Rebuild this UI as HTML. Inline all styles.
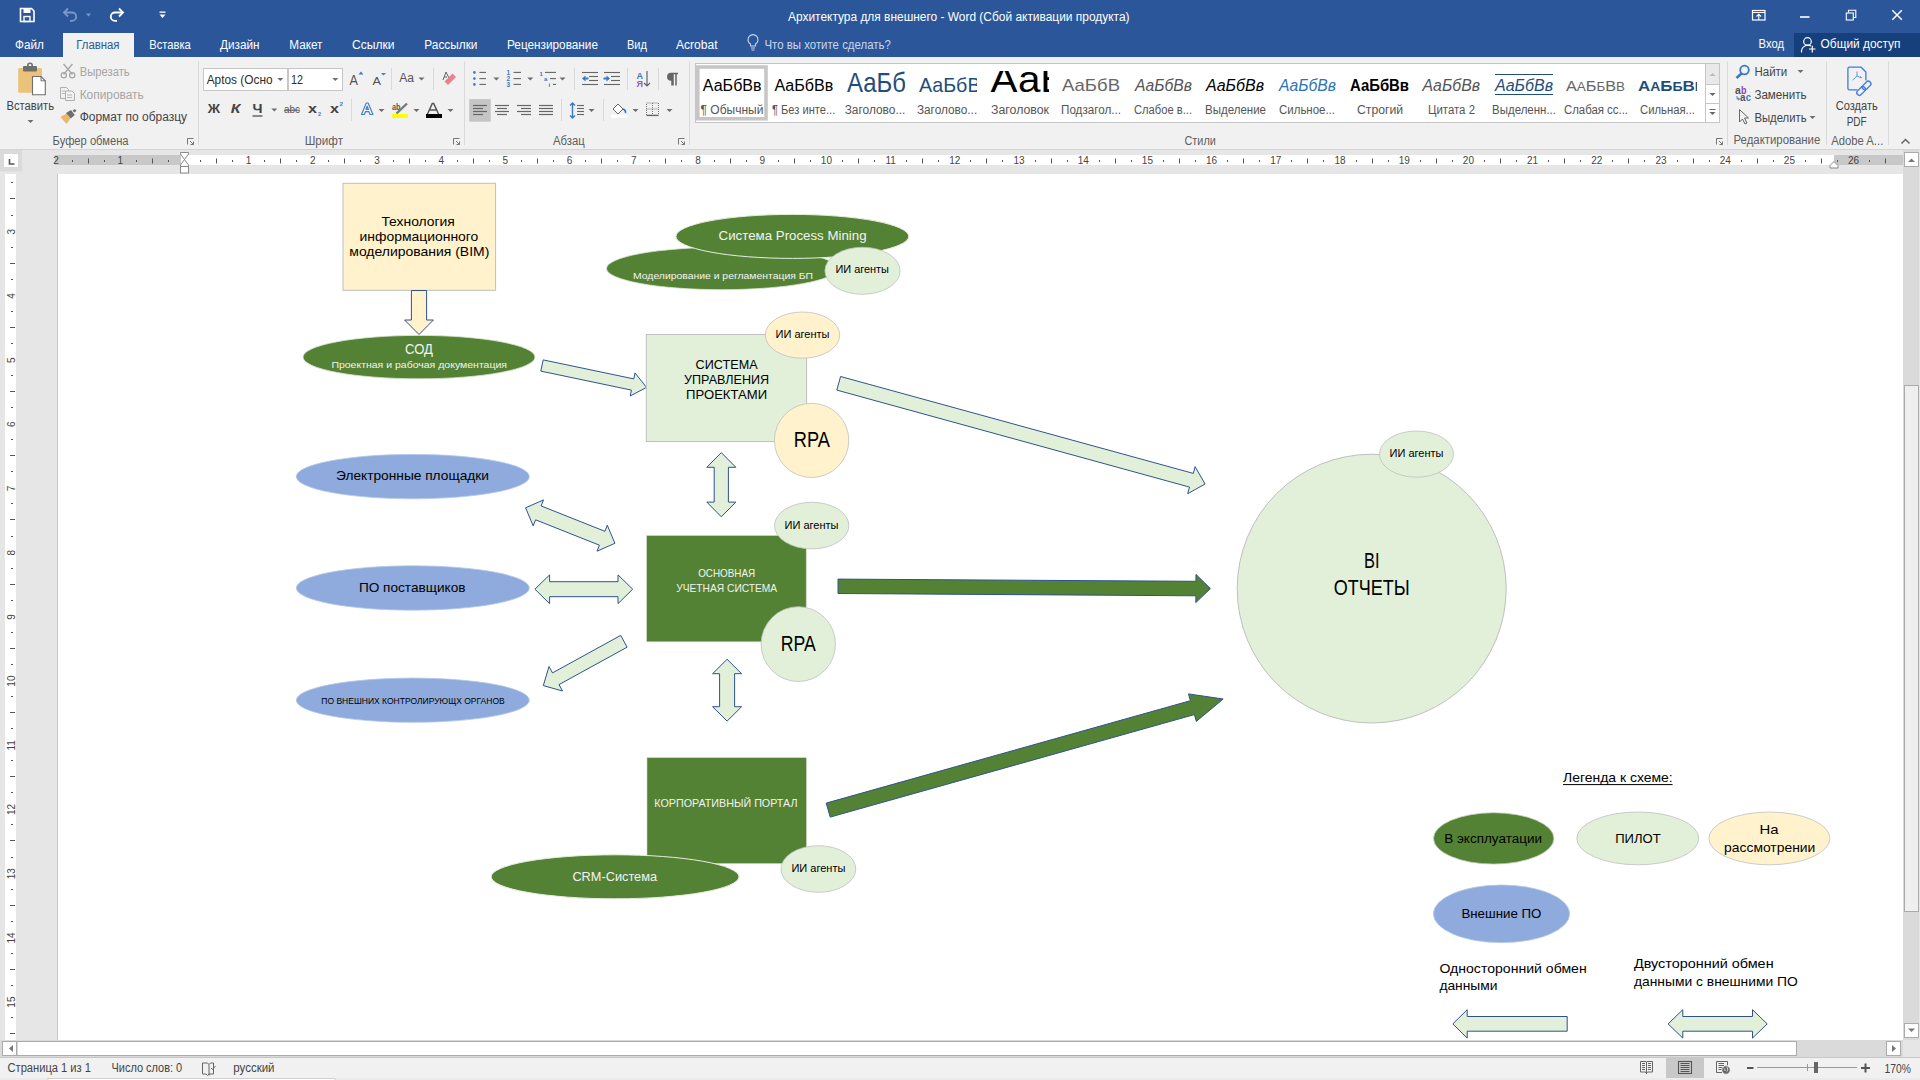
<!DOCTYPE html>
<html><head><meta charset="utf-8"><title>Word</title>
<style>
html,body{margin:0;padding:0;width:1920px;height:1080px;overflow:hidden;background:#fff;}
svg{display:block;font-family:"Liberation Sans", sans-serif;}
</style></head><body>
<svg width="1920" height="1080" viewBox="0 0 1920 1080">
<rect x="0" y="0" width="1920" height="57" fill="#2B579A" stroke="none" stroke-width="1" />
<path d="M20.5,8.5 h11 l2.5,2.5 v10.5 h-13.5 z" fill="none" stroke="#fff" stroke-width="1.6"/>
<rect x="23.5" y="9" width="7" height="4" fill="#fff"/>
<rect x="24" y="16.5" width="6" height="5" fill="none" stroke="#fff" stroke-width="1.4"/>
<path d="M65,12.5 h7 a4.2,4.2 0 0 1 0,8.4 h-2" fill="none" stroke="#7C99C6" stroke-width="1.8"/>
<path d="M68,8.5 l-4,4 4,4" fill="none" stroke="#7C99C6" stroke-width="1.8"/>
<path d="M86,13.5 h5 l-2.5,3 z" fill="#7C99C6"/>
<path d="M122,12.5 h-7 a4.2,4.2 0 0 0 0,8.4 h2" fill="none" stroke="#fff" stroke-width="1.8"/>
<path d="M119,8.5 l4,4 -4,4" fill="none" stroke="#fff" stroke-width="1.8"/>
<rect x="159.5" y="11.5" width="6" height="1.3" fill="#fff"/>
<path d="M159.5,14.5 h6 l-3,3.5 z" fill="#fff"/>
<text x="788" y="21.2" font-size="12.5" fill="#FFFFFF" text-anchor="start" font-weight="normal" font-style="normal" textLength="341.5" lengthAdjust="spacingAndGlyphs" >Архитектура для внешнего - Word (Сбой активации продукта)</text>
<rect x="1752.5" y="10.5" width="12.5" height="9.5" fill="none" stroke="#fff" stroke-width="1.2"/>
<line x1="1752.5" y1="12.5" x2="1765" y2="12.5" stroke="#fff" stroke-width="1"/>
<path d="M1758.8,20 v-5 M1756.5,16.5 l2.3,-2.3 2.3,2.3" fill="none" stroke="#fff" stroke-width="1.1"/>
<rect x="1800" y="16.2" width="9.5" height="1.6" fill="#FFFFFF" stroke="none" stroke-width="1" />
<rect x="1846.3" y="13" width="7" height="7" fill="none" stroke="#fff" stroke-width="1.1"/>
<path d="M1848.5,12.5 v-2.3 h7.3 v7.3 h-2.3" fill="none" stroke="#fff" stroke-width="1.1"/>
<path d="M1892.3,10.3 l9.5,9.5 M1901.8,10.3 l-9.5,9.5" stroke="#fff" stroke-width="1.5"/>
<rect x="63" y="33" width="71" height="24" fill="#F1F1F1" stroke="none" stroke-width="1" />
<text x="15" y="49.3" font-size="12.5" fill="#FFFFFF" text-anchor="start" font-weight="normal" font-style="normal" textLength="28.8" lengthAdjust="spacingAndGlyphs" >Файл</text>
<text x="76.3" y="49.3" font-size="12.5" fill="#2B579A" text-anchor="start" font-weight="normal" font-style="normal" textLength="43.2" lengthAdjust="spacingAndGlyphs" >Главная</text>
<text x="149.3" y="49.3" font-size="12.5" fill="#FFFFFF" text-anchor="start" font-weight="normal" font-style="normal" textLength="41.5" lengthAdjust="spacingAndGlyphs" >Вставка</text>
<text x="220" y="49.3" font-size="12.5" fill="#FFFFFF" text-anchor="start" font-weight="normal" font-style="normal" textLength="39.5" lengthAdjust="spacingAndGlyphs" >Дизайн</text>
<text x="289.3" y="49.3" font-size="12.5" fill="#FFFFFF" text-anchor="start" font-weight="normal" font-style="normal" textLength="33.2" lengthAdjust="spacingAndGlyphs" >Макет</text>
<text x="352" y="49.3" font-size="12.5" fill="#FFFFFF" text-anchor="start" font-weight="normal" font-style="normal" textLength="42.5" lengthAdjust="spacingAndGlyphs" >Ссылки</text>
<text x="424.3" y="49.3" font-size="12.5" fill="#FFFFFF" text-anchor="start" font-weight="normal" font-style="normal" textLength="53.2" lengthAdjust="spacingAndGlyphs" >Рассылки</text>
<text x="507" y="49.3" font-size="12.5" fill="#FFFFFF" text-anchor="start" font-weight="normal" font-style="normal" textLength="91" lengthAdjust="spacingAndGlyphs" >Рецензирование</text>
<text x="627" y="49.3" font-size="12.5" fill="#FFFFFF" text-anchor="start" font-weight="normal" font-style="normal" textLength="20" lengthAdjust="spacingAndGlyphs" >Вид</text>
<text x="676" y="49.3" font-size="12.5" fill="#FFFFFF" text-anchor="start" font-weight="normal" font-style="normal" textLength="41.5" lengthAdjust="spacingAndGlyphs" >Acrobat</text>
<path d="M750.5,46 v-2 a5,5 0 1 1 5,0 v2 z" fill="none" stroke="#C9D5EA" stroke-width="1.1"/>
<path d="M751,48 h4 M751.5,50 h3" stroke="#C9D5EA" stroke-width="1.1"/>
<text x="764.5" y="49.3" font-size="12.5" fill="#C9D5EA" text-anchor="start" font-weight="normal" font-style="normal" textLength="126.3" lengthAdjust="spacingAndGlyphs" >Что вы хотите сделать?</text>
<text x="1758.6" y="48.4" font-size="12.5" fill="#FFFFFF" text-anchor="start" font-weight="normal" font-style="normal" textLength="25.4" lengthAdjust="spacingAndGlyphs" >Вход</text>
<rect x="1794" y="33" width="126" height="24" fill="#16407B" stroke="none" stroke-width="1" />
<circle cx="1807.5" cy="41.5" r="3.8" fill="none" stroke="#fff" stroke-width="1.2"/>
<path d="M1801.5,52.5 a6.5,6.5 0 0 1 9.5,-6.5" fill="none" stroke="#fff" stroke-width="1.2"/>
<path d="M1809,49 h6.5 M1812.3,45.8 v6.7" stroke="#fff" stroke-width="1.2"/>
<text x="1820.6" y="48.4" font-size="12.5" fill="#FFFFFF" text-anchor="start" font-weight="normal" font-style="normal" textLength="79.8" lengthAdjust="spacingAndGlyphs" >Общий доступ</text>
<rect x="0" y="57" width="1920" height="92" fill="#F1F1F1" stroke="none" stroke-width="1" />
<line x1="0" y1="149.5" x2="1920" y2="149.5" stroke="#D4D4D4" stroke-width="1" />
<rect x="18.2" y="68" width="23.8" height="24.7" rx="1.5" fill="#EBC27A"/>
<rect x="23" y="66" width="14" height="5.5" rx="1" fill="#6E6E6E"/>
<circle cx="30" cy="65.5" r="2.2" fill="none" stroke="#6E6E6E" stroke-width="1.6"/>
<path d="M32.5,76.5 h8.5 l4.3,4.3 v14 h-12.8 z" fill="#fff" stroke="#6E6E6E" stroke-width="1.1"/>
<path d="M41,76.5 v4.3 h4.3" fill="none" stroke="#6E6E6E" stroke-width="1"/>
<text x="6.5" y="109.7" font-size="12" fill="#444444" text-anchor="start" font-weight="normal" font-style="normal" textLength="47.5" lengthAdjust="spacingAndGlyphs" >Вставить</text>
<path d="M27.5,120.0 h6 l-3,3 z" fill="#6D6D6D"/>
<path d="M63.5,64 l9,10.5 M72.5,64 l-9,10.5" stroke="#A8A8A8" stroke-width="1.4"/>
<circle cx="63.8" cy="75.3" r="2.6" fill="none" stroke="#A8A8A8" stroke-width="1.3"/>
<circle cx="72.2" cy="75.3" r="2.6" fill="none" stroke="#A8A8A8" stroke-width="1.3"/>
<text x="79.7" y="76.1" font-size="12" fill="#A6A6A6" text-anchor="start" font-weight="normal" font-style="normal" textLength="50.0" lengthAdjust="spacingAndGlyphs" >Вырезать</text>
<path d="M60.5,87.5 h6 l2,2 v9 h-8 z" fill="#F1F1F1" stroke="#AEAEAE" stroke-width="1"/>
<path d="M65.5,91 h6.5 l2.5,2.5 v7 h-9 z" fill="#F1F1F1" stroke="#AEAEAE" stroke-width="1"/>
<path d="M62,91 h3 M62,93.5 h3 M67,95 h5 M67,97.5 h5" stroke="#AEAEAE" stroke-width="0.9"/>
<text x="79.7" y="98.8" font-size="12" fill="#A6A6A6" text-anchor="start" font-weight="normal" font-style="normal" textLength="64.1" lengthAdjust="spacingAndGlyphs" >Копировать</text>
<path d="M60.5,117 l6,-3.5 4,5 -4,5.5 z" fill="#E8B86A"/>
<path d="M66,113 l5,-3 3.8,5 -4,3.5 z" fill="#6E6E6E"/>
<path d="M72.5,110.5 l2.5,-1.5 1.5,2 -2.3,1.6 z" fill="#6E6E6E"/>
<text x="79.7" y="121.1" font-size="12" fill="#444444" text-anchor="start" font-weight="normal" font-style="normal" textLength="107.3" lengthAdjust="spacingAndGlyphs" >Формат по образцу</text>
<text x="52.6" y="144.6" font-size="12" fill="#5E5E5E" text-anchor="start" font-weight="normal" font-style="normal" textLength="76.0" lengthAdjust="spacingAndGlyphs" >Буфер обмена</text>
<path d="M187.5,144.5 v-6 h6" fill="none" stroke="#777" stroke-width="1"/>
<path d="M190,141 l3.5,3.5 M193.5,141.5 v3 h-3" fill="none" stroke="#777" stroke-width="1"/>
<line x1="198.5" y1="61.5" x2="198.5" y2="145" stroke="#D9D9D9" stroke-width="1" />
<rect x="203.5" y="68.5" width="84" height="22" fill="#fff" stroke="#C6C6C6" stroke-width="1" />
<rect x="288.5" y="68.5" width="54" height="22" fill="#fff" stroke="#C6C6C6" stroke-width="1" />
<text x="206.7" y="83.5" font-size="12" fill="#2C2C2C" text-anchor="start" font-weight="normal" font-style="normal" textLength="65.9" lengthAdjust="spacingAndGlyphs" >Aptos (Осно</text>
<path d="M277.3,78.0 h6 l-3,3 z" fill="#6D6D6D"/>
<text x="291" y="83.5" font-size="12" fill="#2C2C2C" text-anchor="start" font-weight="normal" font-style="normal" textLength="12" lengthAdjust="spacingAndGlyphs" >12</text>
<path d="M332.3,78.0 h6 l-3,3 z" fill="#6D6D6D"/>
<text x="349.6" y="85" font-size="14" fill="#555" text-anchor="start" font-weight="normal" font-style="normal" textLength="8.4" lengthAdjust="spacingAndGlyphs" >A</text>
<path d="M358.5,74.5 l2.5,-3 2.5,3 z" fill="#3F7FC4"/>
<text x="372.5" y="85" font-size="11" fill="#555" text-anchor="start" font-weight="normal" font-style="normal" textLength="8.5" lengthAdjust="spacingAndGlyphs" >A</text>
<path d="M381,73 h5 l-2.5,2.5 z" fill="#3F7FC4"/>
<line x1="391.5" y1="68" x2="391.5" y2="90" stroke="#D9D9D9" stroke-width="1" />
<text x="399.2" y="81.5" font-size="12.5" fill="#555" text-anchor="start" font-weight="normal" font-style="normal" textLength="14.8" lengthAdjust="spacingAndGlyphs" >Aa</text>
<path d="M418.5,77.5 h6 l-3,3 z" fill="#6D6D6D"/>
<line x1="433.5" y1="68" x2="433.5" y2="90" stroke="#D9D9D9" stroke-width="1" />
<path d="M446,72 l-3,8 M446,72 l3,6 M444,77 h3" stroke="#666" stroke-width="1" fill="none"/>
<path d="M448,85 l8,-8 -3.5,-3.5 -8,8 z" fill="#E9818E"/>
<text x="207.8" y="113.3" font-size="13" fill="#444" text-anchor="start" font-weight="bold" font-style="normal" textLength="12.3" lengthAdjust="spacingAndGlyphs" >Ж</text>
<text x="230.7" y="113.3" font-size="13" fill="#444" text-anchor="start" font-weight="bold" font-style="italic" textLength="9.7" lengthAdjust="spacingAndGlyphs" >К</text>
<text x="252.5" y="113.3" font-size="13" fill="#444" text-anchor="start" font-weight="bold" font-style="normal" textLength="10.0" lengthAdjust="spacingAndGlyphs" >Ч</text>
<line x1="252.5" y1="116" x2="262.5" y2="116" stroke="#444" stroke-width="1.2" />
<path d="M271.3,108.5 h6 l-3,3 z" fill="#6D6D6D"/>
<text x="284" y="113.3" font-size="11.5" fill="#555" text-anchor="start" font-weight="normal" font-style="normal" textLength="16" lengthAdjust="spacingAndGlyphs" >abc</text>
<line x1="284" y1="110.2" x2="300" y2="110.2" stroke="#555" stroke-width="1" />
<text x="308" y="113.3" font-size="13" fill="#444" text-anchor="start" font-weight="bold" font-style="normal" textLength="9" lengthAdjust="spacingAndGlyphs" >x</text>
<text x="318" y="115.5" font-size="5.5" fill="#3F7FC4" text-anchor="start" font-weight="bold" font-style="normal" textLength="3" lengthAdjust="spacingAndGlyphs" >2</text>
<text x="330" y="113.3" font-size="13" fill="#444" text-anchor="start" font-weight="bold" font-style="normal" textLength="9" lengthAdjust="spacingAndGlyphs" >x</text>
<text x="339.5" y="106" font-size="5.5" fill="#3F7FC4" text-anchor="start" font-weight="bold" font-style="normal" textLength="3.5" lengthAdjust="spacingAndGlyphs" >2</text>
<line x1="351.5" y1="99" x2="351.5" y2="121" stroke="#D9D9D9" stroke-width="1" />
<path d="M361.5,114.5 l4.8,-11.5 h1.8 l4.8,11.5 h-2.8 l-1.1,-2.8 h-3.6 l-1.1,2.8 z M366,109.3 h2.4 l-1.2,-3.2 z" fill="#fff" stroke="#3F7FC4" stroke-width="1.2" stroke-linejoin="round"/>
<path d="M378.5,109.0 h6 l-3,3 z" fill="#6D6D6D"/>
<text x="392" y="109.5" font-size="8.5" fill="#555" text-anchor="start" font-weight="bold" font-style="normal" textLength="8.5" lengthAdjust="spacingAndGlyphs" >ab</text>
<path d="M396.5,113.5 l10.5,-10" stroke="#777" stroke-width="2.4"/>
<rect x="392" y="114" width="16" height="4" fill="#FFFF00" stroke="none" stroke-width="1" />
<path d="M413.5,109.0 h6 l-3,3 z" fill="#6D6D6D"/>
<path d="M427.5,114 l4.8,-10.5 h1.4 l4.8,10.5 M429.5,110 h7" fill="none" stroke="#555" stroke-width="1.5"/>
<rect x="426" y="114" width="16" height="4" fill="#000" stroke="none" stroke-width="1" />
<path d="M447.5,109.0 h6 l-3,3 z" fill="#6D6D6D"/>
<text x="304.7" y="144.6" font-size="12" fill="#5E5E5E" text-anchor="start" font-weight="normal" font-style="normal" textLength="38.3" lengthAdjust="spacingAndGlyphs" >Шрифт</text>
<path d="M453.5,144.5 v-6 h6" fill="none" stroke="#777" stroke-width="1"/>
<path d="M456,141 l3.5,3.5 M459.5,141.5 v3 h-3" fill="none" stroke="#777" stroke-width="1"/>
<line x1="464.5" y1="61.5" x2="464.5" y2="145" stroke="#D9D9D9" stroke-width="1" />
<circle cx="474.4" cy="72.4" r="1.3" fill="#3C78C0"/>
<line x1="479.4" y1="72.4" x2="486" y2="72.4" stroke="#666" stroke-width="1.1" />
<circle cx="474.4" cy="78.6" r="1.3" fill="#3C78C0"/>
<line x1="479.4" y1="78.6" x2="486" y2="78.6" stroke="#666" stroke-width="1.1" />
<circle cx="474.4" cy="84.4" r="1.3" fill="#3C78C0"/>
<line x1="479.4" y1="84.4" x2="486" y2="84.4" stroke="#666" stroke-width="1.1" />
<path d="M493.4,77.5 h6 l-3,3 z" fill="#6D6D6D"/>
<text x="506.5" y="74.9" font-size="6.5" fill="#3C78C0" text-anchor="start" font-weight="bold" font-style="normal" >1</text>
<line x1="513.5" y1="72.4" x2="521" y2="72.4" stroke="#666" stroke-width="1.1" />
<text x="506.5" y="81.1" font-size="6.5" fill="#3C78C0" text-anchor="start" font-weight="bold" font-style="normal" >2</text>
<line x1="513.5" y1="78.6" x2="521" y2="78.6" stroke="#666" stroke-width="1.1" />
<text x="506.5" y="86.9" font-size="6.5" fill="#3C78C0" text-anchor="start" font-weight="bold" font-style="normal" >3</text>
<line x1="513.5" y1="84.4" x2="521" y2="84.4" stroke="#666" stroke-width="1.1" />
<path d="M527.3,77.5 h6 l-3,3 z" fill="#6D6D6D"/>
<text x="539.5" y="75.5" font-size="6" fill="#3C78C0" text-anchor="start" font-weight="bold" font-style="normal" >1</text>
<line x1="545" y1="72.4" x2="556" y2="72.4" stroke="#666" stroke-width="1.1" />
<text x="544" y="81" font-size="6" fill="#3C78C0" text-anchor="start" font-weight="bold" font-style="normal" >a</text>
<line x1="550" y1="78.6" x2="556" y2="78.6" stroke="#666" stroke-width="1.1" />
<text x="548.5" y="86.5" font-size="6" fill="#3C78C0" text-anchor="start" font-weight="bold" font-style="normal" >i</text>
<line x1="553" y1="84.4" x2="556" y2="84.4" stroke="#666" stroke-width="1.1" />
<path d="M559.5,77.5 h6 l-3,3 z" fill="#6D6D6D"/>
<line x1="574.5" y1="68" x2="574.5" y2="90" stroke="#D9D9D9" stroke-width="1" />
<line x1="582" y1="72.5" x2="598" y2="72.5" stroke="#666" stroke-width="1.1" />
<line x1="589" y1="76.5" x2="598" y2="76.5" stroke="#666" stroke-width="1.1" />
<line x1="589" y1="80.5" x2="598" y2="80.5" stroke="#666" stroke-width="1.1" />
<line x1="582" y1="84.5" x2="598" y2="84.5" stroke="#666" stroke-width="1.1" />
<path d="M582,78.5 l3.5,-3 v2 h3 v2 h-3 v2 z" fill="#3C78C0"/>
<line x1="604" y1="72.5" x2="620" y2="72.5" stroke="#666" stroke-width="1.1" />
<line x1="611" y1="76.5" x2="620" y2="76.5" stroke="#666" stroke-width="1.1" />
<line x1="611" y1="80.5" x2="620" y2="80.5" stroke="#666" stroke-width="1.1" />
<line x1="604" y1="84.5" x2="620" y2="84.5" stroke="#666" stroke-width="1.1" />
<path d="M610,78.5 l-3.5,-3 v2 h-3 v2 h3 v2 z" fill="#3C78C0"/>
<line x1="627.5" y1="68" x2="627.5" y2="90" stroke="#D9D9D9" stroke-width="1" />
<text x="636.5" y="78.5" font-size="9" fill="#3C78C0" text-anchor="start" font-weight="bold" font-style="normal" >A</text>
<text x="636.5" y="86.5" font-size="9" fill="#9B59B6" text-anchor="start" font-weight="bold" font-style="normal" >Я</text>
<path d="M647,71 v15 M644,83 l3,3 3,-3" fill="none" stroke="#666" stroke-width="1.2"/>
<line x1="658.5" y1="68" x2="658.5" y2="90" stroke="#D9D9D9" stroke-width="1" />
<path d="M673,73.5 h-2 a3.2,3.2 0 0 0 0,6.4 h1 v5.6 M673,73.5 v12 M676,73.5 v12 M672,73.5 h6" fill="none" stroke="#666" stroke-width="1.5"/>
<path d="M671,73.5 a3.2,3.2 0 0 0 0,6.4 h2 v-6.4 z" fill="#666"/>
<rect x="469.2" y="99.1" width="21.6" height="22.6" fill="#C5C5C5" stroke="none" stroke-width="1" />
<line x1="473" y1="105.5" x2="487" y2="105.5" stroke="#666" stroke-width="1.2" />
<line x1="473" y1="108.5" x2="483" y2="108.5" stroke="#666" stroke-width="1.2" />
<line x1="473" y1="111.5" x2="487" y2="111.5" stroke="#666" stroke-width="1.2" />
<line x1="473" y1="114.5" x2="483" y2="114.5" stroke="#666" stroke-width="1.2" />
<line x1="495.0" y1="105.5" x2="509.0" y2="105.5" stroke="#666" stroke-width="1.2" />
<line x1="497.0" y1="108.5" x2="507.0" y2="108.5" stroke="#666" stroke-width="1.2" />
<line x1="495.0" y1="111.5" x2="509.0" y2="111.5" stroke="#666" stroke-width="1.2" />
<line x1="497.0" y1="114.5" x2="507.0" y2="114.5" stroke="#666" stroke-width="1.2" />
<line x1="517" y1="105.5" x2="531" y2="105.5" stroke="#666" stroke-width="1.2" />
<line x1="521" y1="108.5" x2="531" y2="108.5" stroke="#666" stroke-width="1.2" />
<line x1="517" y1="111.5" x2="531" y2="111.5" stroke="#666" stroke-width="1.2" />
<line x1="521" y1="114.5" x2="531" y2="114.5" stroke="#666" stroke-width="1.2" />
<line x1="539" y1="105.5" x2="553" y2="105.5" stroke="#666" stroke-width="1.2" />
<line x1="539" y1="108.5" x2="553" y2="108.5" stroke="#666" stroke-width="1.2" />
<line x1="539" y1="111.5" x2="553" y2="111.5" stroke="#666" stroke-width="1.2" />
<line x1="539" y1="114.5" x2="553" y2="114.5" stroke="#666" stroke-width="1.2" />
<line x1="561.5" y1="99" x2="561.5" y2="121" stroke="#D9D9D9" stroke-width="1" />
<path d="M572.5,103 v15 M570,105.5 l2.5,-2.5 2.5,2.5 M570,115.5 l2.5,2.5 2.5,-2.5" fill="none" stroke="#3C78C0" stroke-width="1.4"/>
<line x1="577" y1="105.5" x2="584" y2="105.5" stroke="#666" stroke-width="1.1" />
<line x1="577" y1="108.5" x2="584" y2="108.5" stroke="#666" stroke-width="1.1" />
<line x1="577" y1="111.5" x2="584" y2="111.5" stroke="#666" stroke-width="1.1" />
<line x1="577" y1="114.5" x2="584" y2="114.5" stroke="#666" stroke-width="1.1" />
<path d="M588.5,109.0 h6 l-3,3 z" fill="#6D6D6D"/>
<line x1="603.5" y1="99" x2="603.5" y2="121" stroke="#D9D9D9" stroke-width="1" />
<path d="M613,109 l5,-5 5,5 -5,5 z" fill="#fff" stroke="#666" stroke-width="1"/>
<path d="M623,109 q3,1 2.5,4" fill="none" stroke="#3C78C0" stroke-width="1.6"/>
<rect x="611" y="114.5" width="16" height="3.5" fill="#fff" stroke="none" stroke-width="1" />
<path d="M632.5,109.0 h6 l-3,3 z" fill="#6D6D6D"/>
<rect x="646.5" y="103" width="12" height="12" fill="none" stroke="#777" stroke-width="1" stroke-dasharray="1,1"/>
<line x1="652.5" y1="103" x2="652.5" y2="115" stroke="#777" stroke-width="1" stroke-dasharray="1,1"/>
<line x1="646.5" y1="109" x2="658.5" y2="109" stroke="#777" stroke-width="1" stroke-dasharray="1,1"/>
<line x1="646.5" y1="115.5" x2="658.5" y2="115.5" stroke="#666" stroke-width="1.2" />
<path d="M666.5,109.0 h6 l-3,3 z" fill="#6D6D6D"/>
<text x="553" y="144.6" font-size="12" fill="#5E5E5E" text-anchor="start" font-weight="normal" font-style="normal" textLength="31.8" lengthAdjust="spacingAndGlyphs" >Абзац</text>
<path d="M678.5,144.5 v-6 h6" fill="none" stroke="#777" stroke-width="1"/>
<path d="M681,141 l3.5,3.5 M684.5,141.5 v3 h-3" fill="none" stroke="#777" stroke-width="1"/>
<line x1="689.5" y1="61.5" x2="689.5" y2="145" stroke="#D9D9D9" stroke-width="1" />
<rect x="695.5" y="63.5" width="1024" height="59" fill="#fff" stroke="#C6C6C6" stroke-width="1" />
<rect x="697.8" y="67" width="68.2" height="51.8" fill="none" stroke="#C6C6C6" stroke-width="3.6"/>
<defs><clipPath id="sc0"><rect x="700" y="71" width="61" height="46"/></clipPath><clipPath id="sc1"><rect x="772" y="71" width="61" height="46"/></clipPath><clipPath id="sc2"><rect x="844" y="71" width="61" height="46"/></clipPath><clipPath id="sc3"><rect x="916" y="71" width="61" height="46"/></clipPath><clipPath id="sc4"><rect x="988" y="71" width="61" height="46"/></clipPath><clipPath id="sc5"><rect x="1060" y="71" width="61" height="46"/></clipPath><clipPath id="sc6"><rect x="1132" y="71" width="61" height="46"/></clipPath><clipPath id="sc7"><rect x="1204" y="71" width="61" height="46"/></clipPath><clipPath id="sc8"><rect x="1276" y="71" width="61" height="46"/></clipPath><clipPath id="sc9"><rect x="1348" y="71" width="61" height="46"/></clipPath><clipPath id="sc10"><rect x="1420" y="71" width="61" height="46"/></clipPath><clipPath id="sc11"><rect x="1492" y="71" width="61" height="46"/></clipPath><clipPath id="sc12"><rect x="1564" y="71" width="61" height="46"/></clipPath><clipPath id="sc13"><rect x="1636" y="71" width="61" height="46"/></clipPath></defs>
<g clip-path="url(#sc0)">
<text x="702.8" y="90.6" font-size="16" fill="#000" text-anchor="start" font-weight="normal" font-style="normal" textLength="58.8" lengthAdjust="spacingAndGlyphs" >АаБбВв</text>
</g>
<text x="700.6" y="113.6" font-size="12" fill="#555" text-anchor="start" font-weight="normal" font-style="normal" textLength="62.8" lengthAdjust="spacingAndGlyphs" >¶ Обычный</text>
<g clip-path="url(#sc1)">
<text x="774.4" y="90.6" font-size="16" fill="#000" text-anchor="start" font-weight="normal" font-style="normal" textLength="59.0" lengthAdjust="spacingAndGlyphs" >АаБбВв</text>
</g>
<text x="772" y="113.6" font-size="12" fill="#555" text-anchor="start" font-weight="normal" font-style="normal" textLength="63.3" lengthAdjust="spacingAndGlyphs" >¶ Без инте...</text>
<g clip-path="url(#sc2)">
<text x="847" y="92.2" font-size="28" fill="#1F4E79" text-anchor="start" font-weight="normal" font-style="normal" textLength="75" lengthAdjust="spacingAndGlyphs" >АаБбВ</text>
</g>
<text x="844.7" y="113.6" font-size="12" fill="#555" text-anchor="start" font-weight="normal" font-style="normal" textLength="60.6" lengthAdjust="spacingAndGlyphs" >Заголово...</text>
<g clip-path="url(#sc3)">
<text x="918.9" y="92.2" font-size="21" fill="#1F4E79" text-anchor="start" font-weight="normal" font-style="normal" textLength="72.1" lengthAdjust="spacingAndGlyphs" >АаБбВв</text>
</g>
<text x="916.9" y="113.6" font-size="12" fill="#555" text-anchor="start" font-weight="normal" font-style="normal" textLength="60.3" lengthAdjust="spacingAndGlyphs" >Заголово...</text>
<g clip-path="url(#sc4)">
<text x="990.5" y="92.2" font-size="37" fill="#000" text-anchor="start" font-weight="normal" font-style="normal" textLength="99.5" lengthAdjust="spacingAndGlyphs" >АаБб</text>
</g>
<text x="991" y="113.6" font-size="12" fill="#555" text-anchor="start" font-weight="normal" font-style="normal" textLength="58" lengthAdjust="spacingAndGlyphs" >Заголовок</text>
<g clip-path="url(#sc5)">
<text x="1062" y="91" font-size="17" fill="#666" text-anchor="start" font-weight="normal" font-style="normal" textLength="58" lengthAdjust="spacingAndGlyphs" >АаБбВ</text>
</g>
<text x="1061" y="113.6" font-size="12" fill="#555" text-anchor="start" font-weight="normal" font-style="normal" textLength="60" lengthAdjust="spacingAndGlyphs" >Подзагол...</text>
<g clip-path="url(#sc6)">
<text x="1135" y="90.6" font-size="16" fill="#555" text-anchor="start" font-weight="normal" font-style="italic" textLength="57" lengthAdjust="spacingAndGlyphs" >АаБбВв</text>
</g>
<text x="1134" y="113.6" font-size="12" fill="#555" text-anchor="start" font-weight="normal" font-style="normal" textLength="58" lengthAdjust="spacingAndGlyphs" >Слабое в...</text>
<g clip-path="url(#sc7)">
<text x="1206" y="90.6" font-size="16" fill="#000" text-anchor="start" font-weight="normal" font-style="italic" textLength="58" lengthAdjust="spacingAndGlyphs" >АаБбВв</text>
</g>
<text x="1205" y="113.6" font-size="12" fill="#555" text-anchor="start" font-weight="normal" font-style="normal" textLength="61" lengthAdjust="spacingAndGlyphs" >Выделение</text>
<g clip-path="url(#sc8)">
<text x="1279" y="90.6" font-size="16" fill="#2E74B5" text-anchor="start" font-weight="normal" font-style="italic" textLength="57" lengthAdjust="spacingAndGlyphs" >АаБбВв</text>
</g>
<text x="1279" y="113.6" font-size="12" fill="#555" text-anchor="start" font-weight="normal" font-style="normal" textLength="56" lengthAdjust="spacingAndGlyphs" >Сильное...</text>
<g clip-path="url(#sc9)">
<text x="1350" y="90.6" font-size="16" fill="#000" text-anchor="start" font-weight="bold" font-style="normal" textLength="59" lengthAdjust="spacingAndGlyphs" >АаБбВв</text>
</g>
<text x="1357" y="113.6" font-size="12" fill="#555" text-anchor="start" font-weight="normal" font-style="normal" textLength="46" lengthAdjust="spacingAndGlyphs" >Строгий</text>
<g clip-path="url(#sc10)">
<text x="1422.5" y="90.6" font-size="16" fill="#555" text-anchor="start" font-weight="normal" font-style="italic" textLength="57.5" lengthAdjust="spacingAndGlyphs" >АаБбВв</text>
</g>
<text x="1428" y="113.6" font-size="12" fill="#555" text-anchor="start" font-weight="normal" font-style="normal" textLength="47" lengthAdjust="spacingAndGlyphs" >Цитата 2</text>
<g clip-path="url(#sc11)">
<text x="1495" y="90.6" font-size="16" fill="#1F4E79" text-anchor="start" font-weight="normal" font-style="italic" textLength="58" lengthAdjust="spacingAndGlyphs" >АаБбВв</text>
</g>
<text x="1492" y="113.6" font-size="12" fill="#555" text-anchor="start" font-weight="normal" font-style="normal" textLength="64" lengthAdjust="spacingAndGlyphs" >Выделенн...</text>
<g clip-path="url(#sc12)">
<text x="1566" y="90.5" fill="#666" font-weight="normal" textLength="59" lengthAdjust="spacingAndGlyphs"><tspan font-size="15.5">А</tspan><tspan font-size="12.8">А</tspan><tspan font-size="15.5">Б</tspan><tspan font-size="12.8">Б</tspan><tspan font-size="15.5">В</tspan><tspan font-size="12.8">В</tspan></text>
</g>
<text x="1564" y="113.6" font-size="12" fill="#555" text-anchor="start" font-weight="normal" font-style="normal" textLength="64" lengthAdjust="spacingAndGlyphs" >Слабая сс...</text>
<g clip-path="url(#sc13)">
<text x="1638" y="90.5" fill="#1F4E79" font-weight="bold" textLength="67" lengthAdjust="spacingAndGlyphs"><tspan font-size="15.5">А</tspan><tspan font-size="12.8">А</tspan><tspan font-size="15.5">Б</tspan><tspan font-size="12.8">Б</tspan><tspan font-size="15.5">В</tspan><tspan font-size="12.8">В</tspan></text>
</g>
<text x="1640" y="113.6" font-size="12" fill="#555" text-anchor="start" font-weight="normal" font-style="normal" textLength="55" lengthAdjust="spacingAndGlyphs" >Сильная...</text>
<line x1="1495" y1="74.5" x2="1553" y2="74.5" stroke="#1F4E79" stroke-width="1" />
<line x1="1495" y1="94.5" x2="1553" y2="94.5" stroke="#1F4E79" stroke-width="1" />
<rect x="1705.5" y="63.5" width="14" height="21" fill="#E9E9E9" stroke="#C6C6C6" stroke-width="1" />
<rect x="1705.5" y="84.5" width="14" height="19" fill="#fff" stroke="#C6C6C6" stroke-width="1" />
<rect x="1705.5" y="103.5" width="14" height="19" fill="#fff" stroke="#C6C6C6" stroke-width="1" />
<path d="M1709.5,76 l3,-3 3,3 z" fill="#B9B9B9"/>
<path d="M1709.5,93 h6 l-3,3 z" fill="#666"/>
<line x1="1709.5" y1="109.5" x2="1715.5" y2="109.5" stroke="#666" stroke-width="1" />
<path d="M1709.5,112 h6 l-3,3 z" fill="#666"/>
<text x="1184.5" y="144.6" font-size="12" fill="#5E5E5E" text-anchor="start" font-weight="normal" font-style="normal" textLength="31.3" lengthAdjust="spacingAndGlyphs" >Стили</text>
<path d="M1716.5,144.5 v-6 h6" fill="none" stroke="#777" stroke-width="1"/>
<path d="M1719,141 l3.5,3.5 M1722.5,141.5 v3 h-3" fill="none" stroke="#777" stroke-width="1"/>
<line x1="1727.5" y1="61.5" x2="1727.5" y2="145" stroke="#D9D9D9" stroke-width="1" />
<circle cx="1744.5" cy="70" r="4.3" fill="none" stroke="#3C78C0" stroke-width="1.8"/>
<path d="M1741.5,73.5 l-5,4.5" stroke="#3C78C0" stroke-width="2.6"/>
<text x="1754.4" y="75.9" font-size="12" fill="#444444" text-anchor="start" font-weight="normal" font-style="normal" textLength="32.9" lengthAdjust="spacingAndGlyphs" >Найти</text>
<path d="M1797.5,70.0 h6 l-3,3 z" fill="#6D6D6D"/>
<text x="1735" y="93.8" font-size="10" fill="#555" text-anchor="start" font-weight="bold" font-style="normal" textLength="5.8" lengthAdjust="spacingAndGlyphs" >a</text>
<text x="1741" y="93.8" font-size="10.5" fill="#8E44AD" text-anchor="start" font-weight="bold" font-style="normal" textLength="5.5" lengthAdjust="spacingAndGlyphs" >b</text>
<text x="1740" y="100.8" font-size="10" fill="#555" text-anchor="start" font-weight="bold" font-style="normal" textLength="5.5" lengthAdjust="spacingAndGlyphs" >a</text>
<text x="1745.8" y="100.8" font-size="10" fill="#3C78C0" text-anchor="start" font-weight="bold" font-style="normal" textLength="5.2" lengthAdjust="spacingAndGlyphs" >c</text>
<path d="M1737,96 v3 h2.5 M1738,97.8 l1.5,1.2 -1.5,1.2" fill="none" stroke="#3C78C0" stroke-width="0.9"/>
<text x="1754.4" y="98.5" font-size="12" fill="#444444" text-anchor="start" font-weight="normal" font-style="normal" textLength="52.2" lengthAdjust="spacingAndGlyphs" >Заменить</text>
<path d="M1739.5,109.5 v12.5 l3,-3 2.5,5 2,-1 -2.5,-5 h4 z" fill="#F1F1F1" stroke="#666" stroke-width="1"/>
<text x="1754.4" y="121.5" font-size="12" fill="#444444" text-anchor="start" font-weight="normal" font-style="normal" textLength="52.2" lengthAdjust="spacingAndGlyphs" >Выделить</text>
<path d="M1809.5,116.0 h6 l-3,3 z" fill="#6D6D6D"/>
<text x="1733.5" y="144.4" font-size="12" fill="#5E5E5E" text-anchor="start" font-weight="normal" font-style="normal" textLength="86.8" lengthAdjust="spacingAndGlyphs" >Редактирование</text>
<line x1="1826.5" y1="61.5" x2="1826.5" y2="145" stroke="#D9D9D9" stroke-width="1" />
<path d="M1857.5,89.8 h-8 a1.6,1.6 0 0 1 -1.6,-1.6 v-19.4 a1.6,1.6 0 0 1 1.6,-1.6 h11.6 l4.8,4.8 v8.5" fill="none" stroke="#3D7BE0" stroke-width="1.3"/>
<path d="M1857,71.5 v4.5 l-4.5,4.2 M1857,76 l4.5,2 -1,-1.5" fill="none" stroke="#3D7BE0" stroke-width="0.8"/>
<rect x="1864" y="80.5" width="5.2" height="10" rx="2.6" transform="rotate(45 1866.6 85.5)" fill="none" stroke="#3D7BE0" stroke-width="1.3"/>
<rect x="1858.5" y="86" width="5.2" height="10" rx="2.6" transform="rotate(45 1861.1 91)" fill="none" stroke="#3D7BE0" stroke-width="1.3"/>
<text x="1835.8" y="110" font-size="12" fill="#444444" text-anchor="start" font-weight="normal" font-style="normal" textLength="42.0" lengthAdjust="spacingAndGlyphs" >Создать</text>
<text x="1846.7" y="125.9" font-size="12" fill="#444444" text-anchor="start" font-weight="normal" font-style="normal" textLength="20.0" lengthAdjust="spacingAndGlyphs" >PDF</text>
<text x="1831.2" y="145.2" font-size="12" fill="#5E5E5E" text-anchor="start" font-weight="normal" font-style="normal" textLength="52.1" lengthAdjust="spacingAndGlyphs" >Adobe A...</text>
<line x1="1888.5" y1="61.5" x2="1888.5" y2="145" stroke="#D9D9D9" stroke-width="1" />
<path d="M1901.5,143.5 l4,-4 4,4" fill="none" stroke="#666" stroke-width="1.5"/>
<rect x="0" y="150" width="1920" height="24" fill="#E6E6E6" stroke="none" stroke-width="1" />
<rect x="0" y="174" width="58" height="866" fill="#E6E6E6" stroke="none" stroke-width="1" />
<rect x="0" y="150" width="22" height="21.5" fill="#DADADA" stroke="none" stroke-width="1" />
<rect x="4" y="154" width="14" height="13" fill="#fff" stroke="none" stroke-width="1" />
<path d="M9.5,159 v5 h5" fill="none" stroke="#555" stroke-width="1.6"/>
<rect x="55" y="155" width="126" height="10" fill="#C8C8C8" stroke="none" stroke-width="1" />
<rect x="181" y="155" width="1653" height="10" fill="#fff" stroke="none" stroke-width="1" />
<rect x="1834" y="155" width="69" height="10" fill="#C8C8C8" stroke="none" stroke-width="1" />
<text x="56.0" y="163.9" font-size="10" fill="#444" text-anchor="middle" font-weight="normal" font-style="normal" >2</text>
<rect x="72" y="160" width="1" height="2" fill="#555" stroke="none" stroke-width="1" />
<line x1="88.5" y1="158.5" x2="88.5" y2="163.5" stroke="#555" stroke-width="1" />
<rect x="104" y="160" width="1" height="2" fill="#555" stroke="none" stroke-width="1" />
<text x="120.2" y="163.9" font-size="10" fill="#444" text-anchor="middle" font-weight="normal" font-style="normal" >1</text>
<rect x="136" y="160" width="1" height="2" fill="#555" stroke="none" stroke-width="1" />
<line x1="152.5" y1="158.5" x2="152.5" y2="163.5" stroke="#555" stroke-width="1" />
<rect x="168" y="160" width="1" height="2" fill="#555" stroke="none" stroke-width="1" />
<rect x="200" y="160" width="1" height="2" fill="#555" stroke="none" stroke-width="1" />
<line x1="216.5" y1="158.5" x2="216.5" y2="163.5" stroke="#555" stroke-width="1" />
<rect x="232" y="160" width="1" height="2" fill="#555" stroke="none" stroke-width="1" />
<text x="248.6" y="163.9" font-size="10" fill="#444" text-anchor="middle" font-weight="normal" font-style="normal" >1</text>
<rect x="264" y="160" width="1" height="2" fill="#555" stroke="none" stroke-width="1" />
<line x1="280.5" y1="158.5" x2="280.5" y2="163.5" stroke="#555" stroke-width="1" />
<rect x="296" y="160" width="1" height="2" fill="#555" stroke="none" stroke-width="1" />
<text x="312.8" y="163.9" font-size="10" fill="#444" text-anchor="middle" font-weight="normal" font-style="normal" >2</text>
<rect x="328" y="160" width="1" height="2" fill="#555" stroke="none" stroke-width="1" />
<line x1="344.5" y1="158.5" x2="344.5" y2="163.5" stroke="#555" stroke-width="1" />
<rect x="360" y="160" width="1" height="2" fill="#555" stroke="none" stroke-width="1" />
<text x="377.0" y="163.9" font-size="10" fill="#444" text-anchor="middle" font-weight="normal" font-style="normal" >3</text>
<rect x="393" y="160" width="1" height="2" fill="#555" stroke="none" stroke-width="1" />
<line x1="409.5" y1="158.5" x2="409.5" y2="163.5" stroke="#555" stroke-width="1" />
<rect x="425" y="160" width="1" height="2" fill="#555" stroke="none" stroke-width="1" />
<text x="441.2" y="163.9" font-size="10" fill="#444" text-anchor="middle" font-weight="normal" font-style="normal" >4</text>
<rect x="457" y="160" width="1" height="2" fill="#555" stroke="none" stroke-width="1" />
<line x1="473.5" y1="158.5" x2="473.5" y2="163.5" stroke="#555" stroke-width="1" />
<rect x="489" y="160" width="1" height="2" fill="#555" stroke="none" stroke-width="1" />
<text x="505.4" y="163.9" font-size="10" fill="#444" text-anchor="middle" font-weight="normal" font-style="normal" >5</text>
<rect x="521" y="160" width="1" height="2" fill="#555" stroke="none" stroke-width="1" />
<line x1="537.5" y1="158.5" x2="537.5" y2="163.5" stroke="#555" stroke-width="1" />
<rect x="553" y="160" width="1" height="2" fill="#555" stroke="none" stroke-width="1" />
<text x="569.6" y="163.9" font-size="10" fill="#444" text-anchor="middle" font-weight="normal" font-style="normal" >6</text>
<rect x="585" y="160" width="1" height="2" fill="#555" stroke="none" stroke-width="1" />
<line x1="601.5" y1="158.5" x2="601.5" y2="163.5" stroke="#555" stroke-width="1" />
<rect x="617" y="160" width="1" height="2" fill="#555" stroke="none" stroke-width="1" />
<text x="633.8" y="163.9" font-size="10" fill="#444" text-anchor="middle" font-weight="normal" font-style="normal" >7</text>
<rect x="649" y="160" width="1" height="2" fill="#555" stroke="none" stroke-width="1" />
<line x1="665.5" y1="158.5" x2="665.5" y2="163.5" stroke="#555" stroke-width="1" />
<rect x="681" y="160" width="1" height="2" fill="#555" stroke="none" stroke-width="1" />
<text x="698.0" y="163.9" font-size="10" fill="#444" text-anchor="middle" font-weight="normal" font-style="normal" >8</text>
<rect x="714" y="160" width="1" height="2" fill="#555" stroke="none" stroke-width="1" />
<line x1="730.5" y1="158.5" x2="730.5" y2="163.5" stroke="#555" stroke-width="1" />
<rect x="746" y="160" width="1" height="2" fill="#555" stroke="none" stroke-width="1" />
<text x="762.2" y="163.9" font-size="10" fill="#444" text-anchor="middle" font-weight="normal" font-style="normal" >9</text>
<rect x="778" y="160" width="1" height="2" fill="#555" stroke="none" stroke-width="1" />
<line x1="794.5" y1="158.5" x2="794.5" y2="163.5" stroke="#555" stroke-width="1" />
<rect x="810" y="160" width="1" height="2" fill="#555" stroke="none" stroke-width="1" />
<text x="826.4" y="163.9" font-size="10" fill="#444" text-anchor="middle" font-weight="normal" font-style="normal" >10</text>
<rect x="842" y="160" width="1" height="2" fill="#555" stroke="none" stroke-width="1" />
<line x1="858.5" y1="158.5" x2="858.5" y2="163.5" stroke="#555" stroke-width="1" />
<rect x="874" y="160" width="1" height="2" fill="#555" stroke="none" stroke-width="1" />
<text x="890.6" y="163.9" font-size="10" fill="#444" text-anchor="middle" font-weight="normal" font-style="normal" >11</text>
<rect x="906" y="160" width="1" height="2" fill="#555" stroke="none" stroke-width="1" />
<line x1="922.5" y1="158.5" x2="922.5" y2="163.5" stroke="#555" stroke-width="1" />
<rect x="938" y="160" width="1" height="2" fill="#555" stroke="none" stroke-width="1" />
<text x="954.8" y="163.9" font-size="10" fill="#444" text-anchor="middle" font-weight="normal" font-style="normal" >12</text>
<rect x="970" y="160" width="1" height="2" fill="#555" stroke="none" stroke-width="1" />
<line x1="986.5" y1="158.5" x2="986.5" y2="163.5" stroke="#555" stroke-width="1" />
<rect x="1002" y="160" width="1" height="2" fill="#555" stroke="none" stroke-width="1" />
<text x="1019.0" y="163.9" font-size="10" fill="#444" text-anchor="middle" font-weight="normal" font-style="normal" >13</text>
<rect x="1035" y="160" width="1" height="2" fill="#555" stroke="none" stroke-width="1" />
<line x1="1051.5" y1="158.5" x2="1051.5" y2="163.5" stroke="#555" stroke-width="1" />
<rect x="1067" y="160" width="1" height="2" fill="#555" stroke="none" stroke-width="1" />
<text x="1083.2" y="163.9" font-size="10" fill="#444" text-anchor="middle" font-weight="normal" font-style="normal" >14</text>
<rect x="1099" y="160" width="1" height="2" fill="#555" stroke="none" stroke-width="1" />
<line x1="1115.5" y1="158.5" x2="1115.5" y2="163.5" stroke="#555" stroke-width="1" />
<rect x="1131" y="160" width="1" height="2" fill="#555" stroke="none" stroke-width="1" />
<text x="1147.4" y="163.9" font-size="10" fill="#444" text-anchor="middle" font-weight="normal" font-style="normal" >15</text>
<rect x="1163" y="160" width="1" height="2" fill="#555" stroke="none" stroke-width="1" />
<line x1="1179.5" y1="158.5" x2="1179.5" y2="163.5" stroke="#555" stroke-width="1" />
<rect x="1195" y="160" width="1" height="2" fill="#555" stroke="none" stroke-width="1" />
<text x="1211.6" y="163.9" font-size="10" fill="#444" text-anchor="middle" font-weight="normal" font-style="normal" >16</text>
<rect x="1227" y="160" width="1" height="2" fill="#555" stroke="none" stroke-width="1" />
<line x1="1243.5" y1="158.5" x2="1243.5" y2="163.5" stroke="#555" stroke-width="1" />
<rect x="1259" y="160" width="1" height="2" fill="#555" stroke="none" stroke-width="1" />
<text x="1275.8" y="163.9" font-size="10" fill="#444" text-anchor="middle" font-weight="normal" font-style="normal" >17</text>
<rect x="1291" y="160" width="1" height="2" fill="#555" stroke="none" stroke-width="1" />
<line x1="1307.5" y1="158.5" x2="1307.5" y2="163.5" stroke="#555" stroke-width="1" />
<rect x="1323" y="160" width="1" height="2" fill="#555" stroke="none" stroke-width="1" />
<text x="1340.0" y="163.9" font-size="10" fill="#444" text-anchor="middle" font-weight="normal" font-style="normal" >18</text>
<rect x="1356" y="160" width="1" height="2" fill="#555" stroke="none" stroke-width="1" />
<line x1="1372.5" y1="158.5" x2="1372.5" y2="163.5" stroke="#555" stroke-width="1" />
<rect x="1388" y="160" width="1" height="2" fill="#555" stroke="none" stroke-width="1" />
<text x="1404.2" y="163.9" font-size="10" fill="#444" text-anchor="middle" font-weight="normal" font-style="normal" >19</text>
<rect x="1420" y="160" width="1" height="2" fill="#555" stroke="none" stroke-width="1" />
<line x1="1436.5" y1="158.5" x2="1436.5" y2="163.5" stroke="#555" stroke-width="1" />
<rect x="1452" y="160" width="1" height="2" fill="#555" stroke="none" stroke-width="1" />
<text x="1468.4" y="163.9" font-size="10" fill="#444" text-anchor="middle" font-weight="normal" font-style="normal" >20</text>
<rect x="1484" y="160" width="1" height="2" fill="#555" stroke="none" stroke-width="1" />
<line x1="1500.5" y1="158.5" x2="1500.5" y2="163.5" stroke="#555" stroke-width="1" />
<rect x="1516" y="160" width="1" height="2" fill="#555" stroke="none" stroke-width="1" />
<text x="1532.6" y="163.9" font-size="10" fill="#444" text-anchor="middle" font-weight="normal" font-style="normal" >21</text>
<rect x="1548" y="160" width="1" height="2" fill="#555" stroke="none" stroke-width="1" />
<line x1="1564.5" y1="158.5" x2="1564.5" y2="163.5" stroke="#555" stroke-width="1" />
<rect x="1580" y="160" width="1" height="2" fill="#555" stroke="none" stroke-width="1" />
<text x="1596.8" y="163.9" font-size="10" fill="#444" text-anchor="middle" font-weight="normal" font-style="normal" >22</text>
<rect x="1612" y="160" width="1" height="2" fill="#555" stroke="none" stroke-width="1" />
<line x1="1628.5" y1="158.5" x2="1628.5" y2="163.5" stroke="#555" stroke-width="1" />
<rect x="1644" y="160" width="1" height="2" fill="#555" stroke="none" stroke-width="1" />
<text x="1661.0" y="163.9" font-size="10" fill="#444" text-anchor="middle" font-weight="normal" font-style="normal" >23</text>
<rect x="1677" y="160" width="1" height="2" fill="#555" stroke="none" stroke-width="1" />
<line x1="1693.5" y1="158.5" x2="1693.5" y2="163.5" stroke="#555" stroke-width="1" />
<rect x="1709" y="160" width="1" height="2" fill="#555" stroke="none" stroke-width="1" />
<text x="1725.2" y="163.9" font-size="10" fill="#444" text-anchor="middle" font-weight="normal" font-style="normal" >24</text>
<rect x="1741" y="160" width="1" height="2" fill="#555" stroke="none" stroke-width="1" />
<line x1="1757.5" y1="158.5" x2="1757.5" y2="163.5" stroke="#555" stroke-width="1" />
<rect x="1773" y="160" width="1" height="2" fill="#555" stroke="none" stroke-width="1" />
<text x="1789.4" y="163.9" font-size="10" fill="#444" text-anchor="middle" font-weight="normal" font-style="normal" >25</text>
<rect x="1805" y="160" width="1" height="2" fill="#555" stroke="none" stroke-width="1" />
<line x1="1821.5" y1="158.5" x2="1821.5" y2="163.5" stroke="#555" stroke-width="1" />
<rect x="1837" y="160" width="1" height="2" fill="#555" stroke="none" stroke-width="1" />
<text x="1853.6" y="163.9" font-size="10" fill="#444" text-anchor="middle" font-weight="normal" font-style="normal" >26</text>
<rect x="1869" y="160" width="1" height="2" fill="#555" stroke="none" stroke-width="1" />
<line x1="1885.5" y1="158.5" x2="1885.5" y2="163.5" stroke="#555" stroke-width="1" />
<path d="M180.5,152.5 h8 v1.5 l-4,5.5 l4,5.5 v1.5 h-8 v-1.5 l4,-5.5 l-4,-5.5 z" fill="#fff" stroke="#8A8A8A" stroke-width="1"/>
<rect x="180.5" y="166.5" width="8" height="6.5" fill="#fff" stroke="#8A8A8A" stroke-width="1"/>
<path d="M1830,168 v-2.5 l4,-4 4,4 v2.5 z" fill="#fff" stroke="#8A8A8A" stroke-width="1"/>
<rect x="5" y="174" width="11" height="866" fill="#fff" stroke="none" stroke-width="1" />
<rect x="11" y="182" width="2" height="1" fill="#555" stroke="none" stroke-width="1" />
<rect x="10" y="198" width="5" height="1" fill="#555" stroke="none" stroke-width="1" />
<rect x="11" y="215" width="2" height="1" fill="#555" stroke="none" stroke-width="1" />
<text x="0" y="0" font-size="10" fill="#444" text-anchor="middle" transform="translate(15,231.7) rotate(-90)">3</text>
<rect x="11" y="247" width="2" height="1" fill="#555" stroke="none" stroke-width="1" />
<rect x="10" y="263" width="5" height="1" fill="#555" stroke="none" stroke-width="1" />
<rect x="11" y="279" width="2" height="1" fill="#555" stroke="none" stroke-width="1" />
<text x="0" y="0" font-size="10" fill="#444" text-anchor="middle" transform="translate(15,295.9) rotate(-90)">4</text>
<rect x="11" y="311" width="2" height="1" fill="#555" stroke="none" stroke-width="1" />
<rect x="10" y="327" width="5" height="1" fill="#555" stroke="none" stroke-width="1" />
<rect x="11" y="343" width="2" height="1" fill="#555" stroke="none" stroke-width="1" />
<text x="0" y="0" font-size="10" fill="#444" text-anchor="middle" transform="translate(15,360.1) rotate(-90)">5</text>
<rect x="11" y="375" width="2" height="1" fill="#555" stroke="none" stroke-width="1" />
<rect x="10" y="391" width="5" height="1" fill="#555" stroke="none" stroke-width="1" />
<rect x="11" y="407" width="2" height="1" fill="#555" stroke="none" stroke-width="1" />
<text x="0" y="0" font-size="10" fill="#444" text-anchor="middle" transform="translate(15,424.3) rotate(-90)">6</text>
<rect x="11" y="439" width="2" height="1" fill="#555" stroke="none" stroke-width="1" />
<rect x="10" y="455" width="5" height="1" fill="#555" stroke="none" stroke-width="1" />
<rect x="11" y="471" width="2" height="1" fill="#555" stroke="none" stroke-width="1" />
<text x="0" y="0" font-size="10" fill="#444" text-anchor="middle" transform="translate(15,488.5) rotate(-90)">7</text>
<rect x="11" y="503" width="2" height="1" fill="#555" stroke="none" stroke-width="1" />
<rect x="10" y="519" width="5" height="1" fill="#555" stroke="none" stroke-width="1" />
<rect x="11" y="536" width="2" height="1" fill="#555" stroke="none" stroke-width="1" />
<text x="0" y="0" font-size="10" fill="#444" text-anchor="middle" transform="translate(15,552.7) rotate(-90)">8</text>
<rect x="11" y="568" width="2" height="1" fill="#555" stroke="none" stroke-width="1" />
<rect x="10" y="584" width="5" height="1" fill="#555" stroke="none" stroke-width="1" />
<rect x="11" y="600" width="2" height="1" fill="#555" stroke="none" stroke-width="1" />
<text x="0" y="0" font-size="10" fill="#444" text-anchor="middle" transform="translate(15,616.9) rotate(-90)">9</text>
<rect x="11" y="632" width="2" height="1" fill="#555" stroke="none" stroke-width="1" />
<rect x="10" y="648" width="5" height="1" fill="#555" stroke="none" stroke-width="1" />
<rect x="11" y="664" width="2" height="1" fill="#555" stroke="none" stroke-width="1" />
<text x="0" y="0" font-size="10" fill="#444" text-anchor="middle" transform="translate(15,681.1) rotate(-90)">10</text>
<rect x="11" y="696" width="2" height="1" fill="#555" stroke="none" stroke-width="1" />
<rect x="10" y="712" width="5" height="1" fill="#555" stroke="none" stroke-width="1" />
<rect x="11" y="728" width="2" height="1" fill="#555" stroke="none" stroke-width="1" />
<text x="0" y="0" font-size="10" fill="#444" text-anchor="middle" transform="translate(15,745.3) rotate(-90)">11</text>
<rect x="11" y="760" width="2" height="1" fill="#555" stroke="none" stroke-width="1" />
<rect x="10" y="776" width="5" height="1" fill="#555" stroke="none" stroke-width="1" />
<rect x="11" y="792" width="2" height="1" fill="#555" stroke="none" stroke-width="1" />
<text x="0" y="0" font-size="10" fill="#444" text-anchor="middle" transform="translate(15,809.5) rotate(-90)">12</text>
<rect x="11" y="824" width="2" height="1" fill="#555" stroke="none" stroke-width="1" />
<rect x="10" y="840" width="5" height="1" fill="#555" stroke="none" stroke-width="1" />
<rect x="11" y="857" width="2" height="1" fill="#555" stroke="none" stroke-width="1" />
<text x="0" y="0" font-size="10" fill="#444" text-anchor="middle" transform="translate(15,873.7) rotate(-90)">13</text>
<rect x="11" y="889" width="2" height="1" fill="#555" stroke="none" stroke-width="1" />
<rect x="10" y="905" width="5" height="1" fill="#555" stroke="none" stroke-width="1" />
<rect x="11" y="921" width="2" height="1" fill="#555" stroke="none" stroke-width="1" />
<text x="0" y="0" font-size="10" fill="#444" text-anchor="middle" transform="translate(15,937.9) rotate(-90)">14</text>
<rect x="11" y="953" width="2" height="1" fill="#555" stroke="none" stroke-width="1" />
<rect x="10" y="969" width="5" height="1" fill="#555" stroke="none" stroke-width="1" />
<rect x="11" y="985" width="2" height="1" fill="#555" stroke="none" stroke-width="1" />
<text x="0" y="0" font-size="10" fill="#444" text-anchor="middle" transform="translate(15,1002.1) rotate(-90)">15</text>
<rect x="11" y="1017" width="2" height="1" fill="#555" stroke="none" stroke-width="1" />
<rect x="10" y="1033" width="5" height="1" fill="#555" stroke="none" stroke-width="1" />
<rect x="58" y="174" width="1845" height="866" fill="#fff" stroke="none" stroke-width="1" />
<line x1="57.5" y1="174" x2="57.5" y2="1040" stroke="#C6C6C6" stroke-width="1" />
<g>
<rect x="343" y="183.3" width="152.6" height="107" fill="#FFF2CC" stroke="#BFBFBF" stroke-width="1" />
<text x="381.4" y="225.8" font-size="13.5" fill="#000" text-anchor="start" font-weight="normal" font-style="normal" textLength="73.5" lengthAdjust="spacingAndGlyphs" >Технология</text>
<text x="359.6" y="241.0" font-size="13.5" fill="#000" text-anchor="start" font-weight="normal" font-style="normal" textLength="118.7" lengthAdjust="spacingAndGlyphs" >информационного</text>
<text x="349.3" y="255.8" font-size="13.5" fill="#000" text-anchor="start" font-weight="normal" font-style="normal" textLength="140" lengthAdjust="spacingAndGlyphs" >моделирования (BIM)</text>
<polygon points="411.4,290.5 411.4,320.0 404.6,320.0 419.0,334.5 433.4,320.0 426.6,320.0 426.6,290.5" fill="#FFF2CC" stroke="#2F528F" stroke-width="1" stroke-linejoin="miter"/>
<ellipse cx="419" cy="357.1" rx="116" ry="21.7" fill="#548235" stroke="#DDE6D5" stroke-width="0.8"/>
<text x="405.0" y="353.5" font-size="14" fill="#F2F2F2" text-anchor="start" font-weight="normal" font-style="normal" textLength="28" lengthAdjust="spacingAndGlyphs" >СОД</text>
<text x="331.4" y="367.7" font-size="9" fill="#F2F2F2" text-anchor="start" font-weight="normal" font-style="normal" textLength="175.6" lengthAdjust="spacingAndGlyphs" >Проектная и рабочая  документация</text>
<ellipse cx="722" cy="268.5" rx="115.5" ry="21.2" fill="#548235" stroke="#DDE6D5" stroke-width="0.8"/>
<ellipse cx="792.3" cy="236.4" rx="116.4" ry="22" fill="#548235" stroke="#E6EDE0" stroke-width="1"/>
<text x="718.6" y="239.7" font-size="13" fill="#F2F2F2" text-anchor="start" font-weight="normal" font-style="normal" textLength="148" lengthAdjust="spacingAndGlyphs" >Система Process Mining</text>
<text x="633.0" y="279.0" font-size="9" fill="#F2F2F2" text-anchor="start" font-weight="normal" font-style="normal" textLength="180" lengthAdjust="spacingAndGlyphs" >Моделирование и регламентация БП</text>
<ellipse cx="862.5" cy="270.8" rx="37.6" ry="23.5" fill="#E2F0D9" stroke="#BFBFBF" stroke-width="0.8"/>
<text x="835.4" y="273.4" font-size="11" fill="#000" text-anchor="start" font-weight="normal" font-style="normal" textLength="53.6" lengthAdjust="spacingAndGlyphs" >ИИ агенты</text>
<polygon points="540.8,371.1 631.4,390.1 630.2,396.0 646.5,387.4 635.0,372.9 633.8,378.9 543.2,359.9" fill="#E2F0D9" stroke="#2F528F" stroke-width="1" stroke-linejoin="miter"/>
<rect x="646.3" y="334.5" width="160.3" height="107" fill="#E2F0D9" stroke="#BFBFBF" stroke-width="1" />
<text x="695.6" y="368.5" font-size="13" fill="#000" text-anchor="start" font-weight="normal" font-style="normal" textLength="62" lengthAdjust="spacingAndGlyphs" >СИСТЕМА</text>
<text x="684.1" y="384.0" font-size="13" fill="#000" text-anchor="start" font-weight="normal" font-style="normal" textLength="85" lengthAdjust="spacingAndGlyphs" >УПРАВЛЕНИЯ</text>
<text x="686.1" y="399.1" font-size="13" fill="#000" text-anchor="start" font-weight="normal" font-style="normal" textLength="81" lengthAdjust="spacingAndGlyphs" >ПРОЕКТАМИ</text>
<ellipse cx="802.5" cy="335.1" rx="37.2" ry="23.1" fill="#FFF2CC" stroke="#BFBFBF" stroke-width="0.8"/>
<text x="775.5" y="338.0" font-size="11" fill="#000" text-anchor="start" font-weight="normal" font-style="normal" textLength="54" lengthAdjust="spacingAndGlyphs" >ИИ агенты</text>
<ellipse cx="811.6" cy="440.4" rx="37.2" ry="37.1" fill="#FFF2CC" stroke="#BFBFBF" stroke-width="0.8"/>
<text x="793.8" y="446.9" font-size="22" fill="#000" text-anchor="start" font-weight="normal" font-style="normal" textLength="36.1" lengthAdjust="spacingAndGlyphs" >RPA</text>
<polygon points="721.3,452.6 706.8,467.3 714.2,467.3 714.2,502.1 706.8,502.1 721.3,516.8 735.8,502.1 728.4,502.1 728.4,467.3 735.8,467.3" fill="#E2F0D9" stroke="#2F528F" stroke-width="1" stroke-linejoin="miter"/>
<polygon points="836.8,390.1 1189.5,487.1 1187.7,493.7 1205.1,484.0 1195.1,466.7 1193.3,473.4 840.6,376.5" fill="#E2F0D9" stroke="#2F528F" stroke-width="1" stroke-linejoin="miter"/>
<ellipse cx="412.8" cy="476.6" rx="116.5" ry="22.2" fill="#8FAADC" stroke="#B4C6E7" stroke-width="0.8"/>
<text x="336.0" y="479.8" font-size="13.5" fill="#000" text-anchor="start" font-weight="normal" font-style="normal" textLength="153" lengthAdjust="spacingAndGlyphs" >Электронные площадки</text>
<ellipse cx="412.8" cy="588" rx="116.5" ry="22.2" fill="#8FAADC" stroke="#B4C6E7" stroke-width="0.8"/>
<text x="358.9" y="591.6" font-size="13.5" fill="#000" text-anchor="start" font-weight="normal" font-style="normal" textLength="106.6" lengthAdjust="spacingAndGlyphs" >ПО поставщиков</text>
<ellipse cx="412.8" cy="700.2" rx="116.5" ry="22.1" fill="#8FAADC" stroke="#B4C6E7" stroke-width="0.8"/>
<text x="321.3" y="703.6" font-size="8.5" fill="#000" text-anchor="start" font-weight="normal" font-style="normal" textLength="183.4" lengthAdjust="spacingAndGlyphs" >ПО ВНЕШНИХ КОНТРОЛИРУЮЩХ ОРГАНОВ</text>
<polygon points="525.6,507.8 533.2,525.9 535.6,519.8 599.4,545.2 597.0,551.2 614.9,543.3 607.3,525.2 604.9,531.3 541.1,505.9 543.5,499.9" fill="#E2F0D9" stroke="#2F528F" stroke-width="1" stroke-linejoin="miter"/>
<polygon points="534.9,589.2 549.6,603.6 549.6,596.7 618.0,596.7 618.0,603.6 632.7,589.2 618.0,574.9 618.0,581.7 549.6,581.7 549.6,574.9" fill="#E2F0D9" stroke="#2F528F" stroke-width="1" stroke-linejoin="miter"/>
<polygon points="620.7,635.4 552.5,672.9 549.0,666.5 543.3,685.6 562.5,691.0 559.0,684.6 627.1,647.2" fill="#E2F0D9" stroke="#2F528F" stroke-width="1" stroke-linejoin="miter"/>
<rect x="646.7" y="535.6" width="159.5" height="106.2" fill="#548235" stroke="#C9D3C2" stroke-width="0.6" />
<text x="698.2" y="576.9" font-size="11" fill="#F2F2F2" text-anchor="start" font-weight="normal" font-style="normal" textLength="57" lengthAdjust="spacingAndGlyphs" >ОСНОВНАЯ</text>
<text x="676.2" y="591.7" font-size="11" fill="#F2F2F2" text-anchor="start" font-weight="normal" font-style="normal" textLength="101" lengthAdjust="spacingAndGlyphs" >УЧЕТНАЯ СИСТЕМА</text>
<ellipse cx="811.7" cy="525.6" rx="37.2" ry="23.3" fill="#E2F0D9" stroke="#BFBFBF" stroke-width="0.8"/>
<text x="784.5" y="529.4" font-size="11" fill="#000" text-anchor="start" font-weight="normal" font-style="normal" textLength="54" lengthAdjust="spacingAndGlyphs" >ИИ агенты</text>
<ellipse cx="798.3" cy="644.1" rx="37.2" ry="37.4" fill="#E2F0D9" stroke="#BFBFBF" stroke-width="0.8"/>
<text x="780.8" y="650.5" font-size="22" fill="#000" text-anchor="start" font-weight="normal" font-style="normal" textLength="35" lengthAdjust="spacingAndGlyphs" >RPA</text>
<polygon points="727.1,659.3 712.6,673.7 719.6,673.7 719.6,706.7 712.6,706.7 727.1,721.1 741.6,706.7 734.6,706.7 734.6,673.7 741.6,673.7" fill="#E2F0D9" stroke="#2F528F" stroke-width="1" stroke-linejoin="miter"/>
<polygon points="838.0,593.5 1195.9,595.8 1195.8,602.6 1210.4,588.6 1196.0,574.4 1195.9,581.3 838.0,579.1" fill="#548235" stroke="#2F528F" stroke-width="1" stroke-linejoin="miter"/>
<polygon points="830.2,817.1 1194.4,714.6 1196.3,721.4 1223.2,699.0 1188.5,693.9 1190.4,700.7 826.2,803.1" fill="#548235" stroke="#2F528F" stroke-width="1" stroke-linejoin="miter"/>
<ellipse cx="1371.7" cy="588.6" rx="134.5" ry="134.4" fill="#E2F0D9" stroke="#BFBFBF" stroke-width="1"/>
<text x="1364.0" y="567.8" font-size="21.5" fill="#000" text-anchor="start" font-weight="normal" font-style="normal" textLength="15.5" lengthAdjust="spacingAndGlyphs" >BI</text>
<text x="1333.8" y="594.7" font-size="21.5" fill="#000" text-anchor="start" font-weight="normal" font-style="normal" textLength="76" lengthAdjust="spacingAndGlyphs" >ОТЧЕТЫ</text>
<ellipse cx="1416.5" cy="454.1" rx="37" ry="23.1" fill="#E2F0D9" stroke="#BFBFBF" stroke-width="0.8"/>
<text x="1389.5" y="457.0" font-size="11" fill="#000" text-anchor="start" font-weight="normal" font-style="normal" textLength="54" lengthAdjust="spacingAndGlyphs" >ИИ агенты</text>
<rect x="647" y="757.7" width="159.4" height="105.8" fill="#548235" stroke="#C9D3C2" stroke-width="0.6" />
<text x="654.3" y="806.5" font-size="11" fill="#F2F2F2" text-anchor="start" font-weight="normal" font-style="normal" textLength="143.2" lengthAdjust="spacingAndGlyphs" >КОРПОРАТИВНЫЙ ПОРТАЛ</text>
<ellipse cx="615.1" cy="876.8" rx="123.9" ry="22" fill="#548235" stroke="#E6EDE0" stroke-width="1"/>
<text x="572.4" y="880.5" font-size="13.5" fill="#F2F2F2" text-anchor="start" font-weight="normal" font-style="normal" textLength="84.7" lengthAdjust="spacingAndGlyphs" >CRM-Система</text>
<ellipse cx="818.4" cy="869" rx="37.4" ry="23.3" fill="#E2F0D9" stroke="#BFBFBF" stroke-width="0.8"/>
<text x="791.4" y="872.0" font-size="11" fill="#000" text-anchor="start" font-weight="normal" font-style="normal" textLength="54" lengthAdjust="spacingAndGlyphs" >ИИ агенты</text>
<text x="1563.0" y="781.8" font-size="13.5" fill="#000" text-anchor="start" font-weight="normal" font-style="normal" textLength="109.7" lengthAdjust="spacingAndGlyphs" >Легенда к схеме:</text>
<line x1="1563" y1="784.6" x2="1672.6" y2="784.6" stroke="#000" stroke-width="1" />
<ellipse cx="1493.7" cy="838.4" rx="60.2" ry="25.7" fill="#548235" stroke="#C9D3C2" stroke-width="0.8"/>
<text x="1444.2" y="842.6" font-size="13.5" fill="#000" text-anchor="start" font-weight="normal" font-style="normal" textLength="97.8" lengthAdjust="spacingAndGlyphs" >В эксплуатации</text>
<ellipse cx="1637.8" cy="838.4" rx="61" ry="26.4" fill="#E2F0D9" stroke="#BFBFBF" stroke-width="0.8"/>
<text x="1615.2" y="842.8" font-size="13.5" fill="#000" text-anchor="start" font-weight="normal" font-style="normal" textLength="45.5" lengthAdjust="spacingAndGlyphs" >ПИЛОТ</text>
<ellipse cx="1769.4" cy="838.4" rx="60.5" ry="26.4" fill="#FFF2CC" stroke="#BFBFBF" stroke-width="0.8"/>
<text x="1759.5" y="833.5" font-size="13.5" fill="#000" text-anchor="start" font-weight="normal" font-style="normal" textLength="19" lengthAdjust="spacingAndGlyphs" >На</text>
<text x="1724.1" y="851.8" font-size="13.5" fill="#000" text-anchor="start" font-weight="normal" font-style="normal" textLength="91.2" lengthAdjust="spacingAndGlyphs" >рассмотрении</text>
<ellipse cx="1501.5" cy="913.8" rx="68.1" ry="28.8" fill="#8FAADC" stroke="#B4C6E7" stroke-width="0.8"/>
<text x="1461.4" y="918.1" font-size="13.5" fill="#000" text-anchor="start" font-weight="normal" font-style="normal" textLength="80" lengthAdjust="spacingAndGlyphs" >Внешние ПО</text>
<text x="1439.4" y="972.8" font-size="13.5" fill="#000" text-anchor="start" font-weight="normal" font-style="normal" textLength="147.3" lengthAdjust="spacingAndGlyphs" >Односторонний обмен</text>
<text x="1439.4" y="990.3" font-size="13.5" fill="#000" text-anchor="start" font-weight="normal" font-style="normal" textLength="58.1" lengthAdjust="spacingAndGlyphs" >данными</text>
<text x="1633.9" y="968.0" font-size="13.5" fill="#000" text-anchor="start" font-weight="normal" font-style="normal" textLength="139.7" lengthAdjust="spacingAndGlyphs" >Двусторонний  обмен</text>
<text x="1633.9" y="985.8" font-size="13.5" fill="#000" text-anchor="start" font-weight="normal" font-style="normal" textLength="163.9" lengthAdjust="spacingAndGlyphs" >данными с внешними ПО</text>
<polygon points="1567.2,1016.5 1467.2,1016.5 1467.2,1009.7 1452.8,1023.9 1467.2,1038.1 1467.2,1031.2 1567.2,1031.2" fill="#E2F0D9" stroke="#2F528F" stroke-width="1" stroke-linejoin="miter"/>
<polygon points="1668.1,1023.9 1682.8,1038.1 1682.8,1031.2 1752.5,1031.2 1752.5,1038.1 1767.2,1023.9 1752.5,1009.7 1752.5,1016.5 1682.8,1016.5 1682.8,1009.7" fill="#E2F0D9" stroke="#2F528F" stroke-width="1" stroke-linejoin="miter"/>
</g>
<rect x="0" y="1040" width="1920" height="17" fill="#E6E6E6" stroke="none" stroke-width="1" />
<rect x="1903" y="150" width="17" height="890" fill="#DADADA" stroke="none" stroke-width="1" />
<rect x="1904.5" y="152.5" width="14" height="14" fill="#fff" stroke="#ABABAB" stroke-width="1" />
<path d="M1908,162 l3.5,-3.5 3.5,3.5 z" fill="#777"/>
<rect x="1904.5" y="385.5" width="14" height="526" fill="#EFEFEF" stroke="#ABABAB" stroke-width="1" />
<rect x="1904.5" y="1023.5" width="14" height="14" fill="#fff" stroke="#ABABAB" stroke-width="1" />
<path d="M1908,1028.5 h7 l-3.5,3.5 z" fill="#777"/>
<rect x="0" y="1040" width="1903" height="17" fill="#DADADA" stroke="none" stroke-width="1" />
<rect x="2.5" y="1041.5" width="14" height="14" fill="#fff" stroke="#ABABAB" stroke-width="1" />
<path d="M13,1045 v7 l-4,-3.5 z" fill="#777"/>
<rect x="17" y="1041.5" width="1779.5" height="14" fill="#fff" stroke="#ABABAB" stroke-width="1" />
<rect x="1886.5" y="1041.5" width="14" height="14" fill="#fff" stroke="#ABABAB" stroke-width="1" />
<path d="M1892,1045 v7 l4,-3.5 z" fill="#777"/>
<rect x="1903" y="1040" width="17" height="17" fill="#E6E6E6" stroke="none" stroke-width="1" />
<rect x="1919" y="150" width="1" height="890" fill="#E6E6E6" stroke="none" stroke-width="1" />
<line x1="0" y1="1057.5" x2="1920" y2="1057.5" stroke="#C6C6C6" stroke-width="1" />
<rect x="0" y="1058" width="1920" height="22" fill="#F1F1F1" stroke="none" stroke-width="1" />
<text x="7.5" y="1072.3" font-size="12" fill="#444" text-anchor="start" font-weight="normal" font-style="normal" textLength="83.5" lengthAdjust="spacingAndGlyphs" >Страница 1 из 1</text>
<text x="111.5" y="1072.3" font-size="12" fill="#444" text-anchor="start" font-weight="normal" font-style="normal" textLength="70.7" lengthAdjust="spacingAndGlyphs" >Число слов: 0</text>
<path d="M202.5,1063 h5 l1.5,1.5 1.5,-1.5 h3 v11 h-4.5 l-1.5,1.5 -1.5,-1.5 h-3.5 z M209,1064.5 v11" fill="none" stroke="#666" stroke-width="1"/>
<path d="M211,1068 l1.5,1.5 3,-3.5" fill="none" stroke="#666" stroke-width="1"/>
<text x="233.3" y="1072.3" font-size="12" fill="#444" text-anchor="start" font-weight="normal" font-style="normal" textLength="41.2" lengthAdjust="spacingAndGlyphs" >русский</text>
<path d="M1640.5,1061.5 h5.5 l0.5,0.5 0.5,-0.5 h5.5 v10.5 h-5 l-1,1.5 -1,-1.5 h-5 z" fill="none" stroke="#666" stroke-width="1"/>
<line x1="1646.5" y1="1062" x2="1646.5" y2="1074" stroke="#666" stroke-width="1" />
<line x1="1642" y1="1063.5" x2="1645" y2="1063.5" stroke="#666" stroke-width="1" />
<line x1="1648" y1="1063.5" x2="1651" y2="1063.5" stroke="#666" stroke-width="1" />
<line x1="1642" y1="1065.5" x2="1645" y2="1065.5" stroke="#666" stroke-width="1" />
<line x1="1648" y1="1065.5" x2="1651" y2="1065.5" stroke="#666" stroke-width="1" />
<line x1="1642" y1="1067.5" x2="1645" y2="1067.5" stroke="#666" stroke-width="1" />
<line x1="1648" y1="1067.5" x2="1651" y2="1067.5" stroke="#666" stroke-width="1" />
<line x1="1642" y1="1069.5" x2="1645" y2="1069.5" stroke="#666" stroke-width="1" />
<line x1="1648" y1="1069.5" x2="1651" y2="1069.5" stroke="#666" stroke-width="1" />
<rect x="1666" y="1058" width="38" height="20" fill="#C8C8C8" stroke="none" stroke-width="1" />
<rect x="1678.5" y="1061.5" width="13" height="12" fill="none" stroke="#555" stroke-width="1.1"/>
<line x1="1680.5" y1="1063.5" x2="1689.5" y2="1063.5" stroke="#555" stroke-width="1" />
<line x1="1680.5" y1="1065.5" x2="1689.5" y2="1065.5" stroke="#555" stroke-width="1" />
<line x1="1680.5" y1="1067.5" x2="1689.5" y2="1067.5" stroke="#555" stroke-width="1" />
<line x1="1680.5" y1="1069.5" x2="1689.5" y2="1069.5" stroke="#555" stroke-width="1" />
<line x1="1680.5" y1="1071.5" x2="1689.5" y2="1071.5" stroke="#555" stroke-width="1" />
<path d="M1722,1072.5 h-5.5 v-11 h11 v4" fill="none" stroke="#666" stroke-width="1"/>
<line x1="1718.5" y1="1063.5" x2="1724" y2="1063.5" stroke="#666" stroke-width="1" />
<line x1="1718.5" y1="1065.5" x2="1724" y2="1065.5" stroke="#666" stroke-width="1" />
<line x1="1718.5" y1="1067.5" x2="1724" y2="1067.5" stroke="#666" stroke-width="1" />
<line x1="1718.5" y1="1069.5" x2="1724" y2="1069.5" stroke="#666" stroke-width="1" />
<circle cx="1726" cy="1070" r="4.2" fill="#666" stroke="#F1F1F1" stroke-width="0.8"/>
<path d="M1723.5,1068 q2,1 1.5,3 M1727,1067 q1.5,2 0,4.5" fill="none" stroke="#F1F1F1" stroke-width="0.8"/>
<rect x="1747" y="1067" width="6.5" height="2" fill="#555" stroke="none" stroke-width="1" />
<line x1="1757" y1="1067.5" x2="1857" y2="1067.5" stroke="#999" stroke-width="1" />
<line x1="1807.5" y1="1064" x2="1807.5" y2="1071" stroke="#999" stroke-width="1" />
<rect x="1814" y="1062" width="4" height="11" fill="#666" stroke="none" stroke-width="1" />
<rect x="1861" y="1067" width="9" height="2" fill="#555" stroke="none" stroke-width="1" />
<rect x="1864.5" y="1063.5" width="2" height="9" fill="#555" stroke="none" stroke-width="1" />
<text x="1884.6" y="1072.5" font-size="12" fill="#444" text-anchor="start" font-weight="normal" font-style="normal" textLength="26.4" lengthAdjust="spacingAndGlyphs" >170%</text>
<rect x="0" y="1078" width="1920" height="2" fill="#EBEBEB" stroke="none" stroke-width="1" />
<rect x="48" y="1078.5" width="287" height="2" fill="#fff" stroke="#C8C8C8" stroke-width="0.8" />
</svg>
</body></html>
